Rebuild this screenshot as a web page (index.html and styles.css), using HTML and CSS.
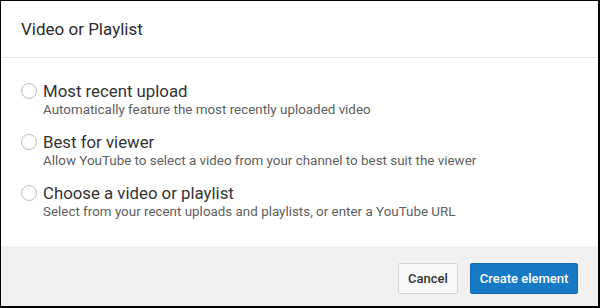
FILE: index.html
```html
<!DOCTYPE html>
<html lang="en">
<head>
    <meta charset="UTF-8">
    <meta name="viewport" content="width=device-width, initial-scale=1.0">
    <title>Video or Playlist</title>
    <link rel="stylesheet" href="styles.css">
</head>
<body>
    <div class="dialog">
        <div class="dialog-header">
            <h1>Video or Playlist</h1>
        </div>

        <div class="dialog-body">
            <label class="option">
                <span class="radio"></span>
                <span class="option-text">
                    <span class="option-title">Most recent upload</span>
                    <span class="option-desc">Automatically feature the most recently uploaded video</span>
                </span>
            </label>
            <label class="option">
                <span class="radio"></span>
                <span class="option-text">
                    <span class="option-title">Best for viewer</span>
                    <span class="option-desc">Allow YouTube to select a video from your channel to best suit the viewer</span>
                </span>
            </label>
            <label class="option">
                <span class="radio"></span>
                <span class="option-text">
                    <span class="option-title">Choose a video or playlist</span>
                    <span class="option-desc">Select from your recent uploads and playlists, or enter a YouTube URL</span>
                </span>
            </label>
        </div>

        <div class="dialog-footer">
            <button class="btn btn-cancel">Cancel</button>
            <button class="btn btn-primary">Create element</button>
        </div>
    </div>
</body>
</html>
```

FILE: styles.css
```css
body {
    margin: 0;
    font-family: Roboto, 'Liberation Sans', sans-serif;
    background-color: #fff;
}
.dialog {
    width: 600px;
    height: 308px;
    box-sizing: border-box;
    border-style: solid;
    border-color: #000;
    border-width: 1px 2px 2px 1px;
    display: flex;
    flex-direction: column;
    background-color: #fff;
}
.dialog-header {
    padding: 16px 20px;
    border-bottom: 1px solid #e6e6e6;
}
h1 {
    margin: 0;
    font-size: 17px;
    font-weight: 400;
    line-height: 24px;
    color: #2b2b2b;
}
.dialog-body {
    flex: 1;
    padding: 23px 20px 0;
    display: flex;
    flex-direction: column;
    gap: 13px;
}
.option {
    display: flex;
    align-items: flex-start;
    gap: 6px;
    cursor: pointer;
}
.radio {
    width: 16px;
    height: 16px;
    box-sizing: border-box;
    border: 1px solid #bdbdbd;
    border-radius: 50%;
    margin-top: 2px;
    flex-shrink: 0;
}
.option-text {
    display: flex;
    flex-direction: column;
}
.option-title {
    font-size: 16.8px;
    line-height: 20px;
    color: #333;
}
.option-desc {
    font-size: 13.4px;
    line-height: 18px;
    color: #606060;
}
.dialog-footer {
    height: 60px;
    box-sizing: border-box;
    background-color: #f1f1f1;
    display: flex;
    justify-content: flex-end;
    align-items: flex-start;
    gap: 12px;
    padding: 17px 20px 0;
}
.btn {
    height: 31px;
    font-family: Roboto, 'Liberation Sans', sans-serif;
    font-size: 13px;
    font-weight: 500;
    border-radius: 2px;
    cursor: pointer;
}
.btn-cancel {
    width: 60px;
    background-color: #f8f8f8;
    border: 1px solid #d3d3d3;
    color: #333;
}
.btn-primary {
    width: 108px;
    background-color: #167ac6;
    border: 1px solid #126db3;
    color: #fff;
}
```
